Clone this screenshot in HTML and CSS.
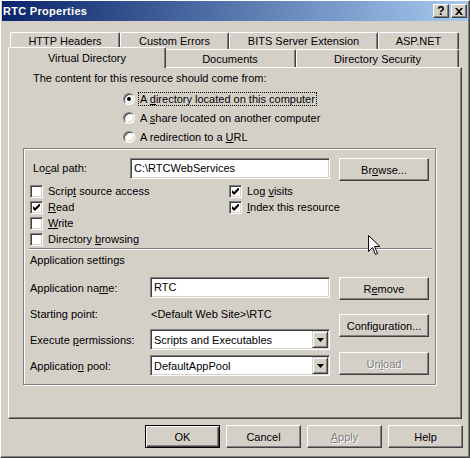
FILE: index.html
```html
<!DOCTYPE html>
<html>
<head>
<meta charset="utf-8">
<title>RTC Properties</title>
<link rel="stylesheet" href="styles.css">
</head>
<body>
<div class="window">
  <div class="titlebar">
    <span class="title">RTC Properties</span>
    <div class="caption-buttons">
      <span class="cap-btn help">?</span>
      <span class="cap-btn close"><svg width="8" height="7" viewBox="0 0 8 7"><path d="M0 0h2l2 2.2L6 0h2L5 3.5 8 7H6L4 4.8 2 7H0l3-3.5z" fill="#000"/></svg></span>
    </div>
  </div>
  <div class="client">
    <div class="tabs">
      <div class="tab-row back">
        <div class="tab t-http">HTTP Headers</div>
        <div class="tab t-errors">Custom Errors</div>
        <div class="tab t-bits">BITS Server Extension</div>
        <div class="tab t-asp">ASP.NET</div>
      </div>
      <div class="tab-row front">
        <div class="tab t-vdir selected">Virtual Directory</div>
        <div class="tab t-docs">Documents</div>
        <div class="tab t-sec">Directory Security</div>
      </div>
    </div>
    <div class="panel">
      <div class="intro">The content for this resource should come from:</div>
      <div class="radios">
        <div class="radio-row"><span class="radio checked"></span><span class="rlabel focus">A <u>d</u>irectory located on this computer</span></div>
        <div class="radio-row"><span class="radio"></span><span class="rlabel">A <u>s</u>hare located on another computer</span></div>
        <div class="radio-row"><span class="radio"></span><span class="rlabel">A redirection to a <u>U</u>RL</span></div>
      </div>
      <div class="frame">
        <div class="path-row">
          <span class="path-label">Lo<u>c</u>al path:</span>
          <span class="textbox w200">C:\RTCWebServices</span>
          <span class="button">Br<u>o</u>wse...</span>
        </div>
        <div class="checks">
          <div class="check"><span class="cbox"></span><span>Scrip<u>t</u> source access</span></div>
          <div class="check"><span class="cbox on"><svg width="7" height="7" viewBox="0 0 7 7"><path d="M0 2l2 2 5-5v3L2 7 0 5z" fill="#000"/></svg></span><span>Log <u>v</u>isits</span></div>
          <div class="check"><span class="cbox on"><svg width="7" height="7" viewBox="0 0 7 7"><path d="M0 2l2 2 5-5v3L2 7 0 5z" fill="#000"/></svg></span><span><u>R</u>ead</span></div>
          <div class="check"><span class="cbox on"><svg width="7" height="7" viewBox="0 0 7 7"><path d="M0 2l2 2 5-5v3L2 7 0 5z" fill="#000"/></svg></span><span><u>I</u>ndex this resource</span></div>
          <div class="check"><span class="cbox"></span><span><u>W</u>rite</span></div>
          <div class="check empty"></div>
          <div class="check"><span class="cbox"></span><span>Directory <u>b</u>rowsing</span></div>
        </div>
        <div class="separator"></div>
        <div class="section-title">Application settings</div>
        <div class="app-settings">
          <div class="app-fields">
            <div class="field-row"><span class="app-label">Application na<u>m</u>e:</span><span class="textbox w180">RTC</span></div>
            <div class="field-row"><span class="app-label">Starting point:</span><span class="static">&lt;Default Web Site&gt;\RTC</span></div>
            <div class="field-row"><span class="app-label">Execute <u>p</u>ermissions:</span><span class="select"><span class="select-text">Scripts and Executables</span><span class="drop"><svg width="7" height="4" viewBox="0 0 7 4"><path d="M0 0h7L3.5 4z" fill="#000"/></svg></span></span></div>
            <div class="field-row"><span class="app-label">Applicatio<u>n</u> pool:</span><span class="select"><span class="select-text">DefaultAppPool</span><span class="drop"><svg width="7" height="4" viewBox="0 0 7 4"><path d="M0 0h7L3.5 4z" fill="#000"/></svg></span></span></div>
          </div>
          <div class="app-buttons">
            <span class="button b-remove">R<u>e</u>move</span>
            <span class="button b-config">Configuration...</span>
            <span class="button b-unload disabled">Un<u>l</u>oad</span>
          </div>
        </div>
      </div>
    </div>
    <div class="dialog-buttons">
      <span class="button default">OK</span>
      <span class="button">Cancel</span>
      <span class="button disabled"><u>A</u>pply</span>
      <span class="button">Help</span>
    </div>
  </div>
  <svg class="cursor" width="13" height="21" viewBox="0 0 13 21"><path d="M0.5 0.5v16l4-4 3 7 2-1-3-7h5.5z" fill="#fff" stroke="#000" stroke-width="1"/></svg>
</div>
</body>
</html>
```
FILE: styles.css
```css
* { box-sizing: border-box; }
html, body { margin: 0; padding: 0; }
body {
  width: 470px; height: 458px; overflow: hidden;
  background: #d4d0c8;
  font-family: "Liberation Sans", Arial, sans-serif;
  font-size: 11px; color: #000;
}
u { text-decoration: underline; text-underline-offset: 1px; }

.window {
  position: relative;
  width: 470px; height: 458px;
  background: #d4d0c8;
  border: 1px solid; border-color: #fff #404040 #404040 #fff;
  box-shadow: inset -1px -1px 0 #808080;
}

.titlebar {
  height: 20px; margin: 0 1px 0 1px;
  background: linear-gradient(to right, #0a246a 0%, #a6caf0 100%);
  display: flex; align-items: center; justify-content: space-between;
  padding: 0 1px 0 1px;
}
.title { color: #fff; font-weight: bold; font-size: 11px; letter-spacing: 0.3px; }
.caption-buttons { display: flex; gap: 2px; }
.cap-btn {
  width: 16px; height: 14px; background: #d4d0c8;
  border: 1px solid; border-color: #fff #404040 #404040 #fff;
  box-shadow: inset -1px -1px 0 #808080;
  display: flex; align-items: center; justify-content: center;
  font-weight: bold; font-size: 12px; line-height: 12px;
}
.cap-btn.close svg { display: block; }

.client { padding: 11px 0 0 7px; }
.tabs { margin-left: 2px; }
.tab-row { display: flex; height: 17px; }
.tab-row.front { height: 18px; }
.tab {
  height: 100%;
  background: #d4d0c8;
  border-top: 1px solid #fff; border-left: 1px solid #fff; border-right: 1px solid #404040;
  box-shadow: inset -1px 0 0 #808080;
  border-radius: 2px 2px 0 0;
  display: flex; align-items: center; justify-content: center;
  white-space: nowrap;
}
.t-http { width: 110px; }
.t-errors { width: 109px; }
.t-bits { width: 149px; }
.t-asp { width: 81px; }
.t-vdir { width: 154px; }
.t-docs { width: 132px; }
.t-sec { width: 163px; }
.tab.selected {
  width: 158px; height: 21px;
  margin: -2px -2px 0 -2px;
  position: relative; z-index: 2;
}

.panel {
  width: 454px; height: 352px;
  border: 1px solid; border-color: #fff #404040 #404040 #fff;
  box-shadow: inset -1px -1px 0 #808080;
  padding-top: 4px;
}
.intro { height: 13px; line-height: 13px; padding-left: 24px; }
.radios { margin: 4px 0 0 114px; }
.radio-row { display: flex; align-items: center; height: 19px; }
.radio {
  width: 12px; height: 12px; border-radius: 50%;
  border: 1px solid; border-color: #808080 #fff #fff #808080;
  box-shadow: inset 1px 1px 0 #404040, inset -1px -1px 0 #d4d0c8;
  background: #fff;
  display: flex; align-items: center; justify-content: center;
}
.radio.checked::after {
  content: ""; width: 4px; height: 4px; border-radius: 50%; background: #000;
}
.rlabel { margin-left: 3px; padding: 0 1px; line-height: 12px; border: 1px solid transparent; }
.rlabel.focus { border: 1px dotted #000; }

.frame {
  margin: 2px 0 0 14px;
  width: 413px; height: 237px;
  border: 1px solid #808080;
  box-shadow: 1px 1px 0 #fff, inset 1px 1px 0 #fff;
  padding: 9px 0 0 7px;
}
.path-row { display: flex; align-items: flex-start; height: 23px; }
.path-label { margin-left: 2px; width: 97px; line-height: 21px; }
.textbox {
  height: 21px; background: #fff;
  border: 1px solid; border-color: #808080 #fff #fff #808080;
  box-shadow: inset 1px 1px 0 #404040, inset -1px -1px 0 #d4d0c8;
  padding-left: 3px; line-height: 19px; white-space: nowrap;
}
.w200 { width: 200px; }
.w180 { width: 180px; }

.button {
  width: 90px; height: 23px; background: #d4d0c8;
  border: 1px solid; border-color: #fff #404040 #404040 #fff;
  box-shadow: inset -1px -1px 0 #808080;
  display: flex; align-items: center; justify-content: center;
  white-space: nowrap;
}
.path-row .button { margin-left: 9px; }
.button.disabled { color: #808080; text-shadow: 1px 1px 0 #fff; }
.button.default {
  border: 1px solid #000;
  box-shadow: inset 1px 1px 0 #fff, inset -1px -1px 0 #404040, inset -2px -2px 0 #808080;
}

.checks {
  margin: 2px 0 0 -1px;
  display: grid; grid-template-columns: 199px auto; grid-auto-rows: 16px;
}
.check { display: flex; align-items: center; }
.cbox {
  width: 13px; height: 13px; background: #fff;
  border: 1px solid; border-color: #808080 #fff #fff #808080;
  box-shadow: inset 1px 1px 0 #404040, inset -1px -1px 0 #d4d0c8;
  margin-right: 5px;
  display: flex; align-items: center; justify-content: center;
}
.cbox svg { display: block; }

.separator {
  margin: 1px 0 0 -2px; width: 403px; height: 2px;
  border-top: 1px solid #808080; border-bottom: 1px solid #fff;
}
.section-title { margin: 4px 0 0 -1px; height: 13px; line-height: 13px; }

.app-settings { display: flex; margin: 10px 0 0 -1px; }
.app-fields { display: flex; flex-direction: column; gap: 5px; width: 300px; }
.field-row { display: flex; align-items: center; height: 21px; }
.app-label { width: 120px; }
.static { padding-left: 1px; }
.select {
  width: 180px; height: 21px; background: #fff;
  border: 1px solid; border-color: #808080 #fff #fff #808080;
  box-shadow: inset 1px 1px 0 #404040, inset -1px -1px 0 #d4d0c8;
  display: flex; align-items: center; justify-content: space-between;
  padding: 1px;
}
.select-text { padding-left: 2px; }
.drop {
  width: 16px; height: 17px; background: #d4d0c8;
  border: 1px solid; border-color: #d4d0c8 #404040 #404040 #d4d0c8;
  box-shadow: inset 1px 1px 0 #fff, inset -1px -1px 0 #808080;
  display: flex; align-items: center; justify-content: center;
}
.drop svg { display: block; }
.app-buttons { display: flex; flex-direction: column; margin-left: 9px; }
.b-config { margin-top: 14px; }
.b-unload { margin-top: 15px; }

.dialog-buttons {
  display: flex; justify-content: flex-end; gap: 6px;
  margin-top: 6px; padding-right: 6px;
}
.dialog-buttons .button { width: 75px; }

.cursor { position: absolute; left: 367px; top: 234px; }
```
